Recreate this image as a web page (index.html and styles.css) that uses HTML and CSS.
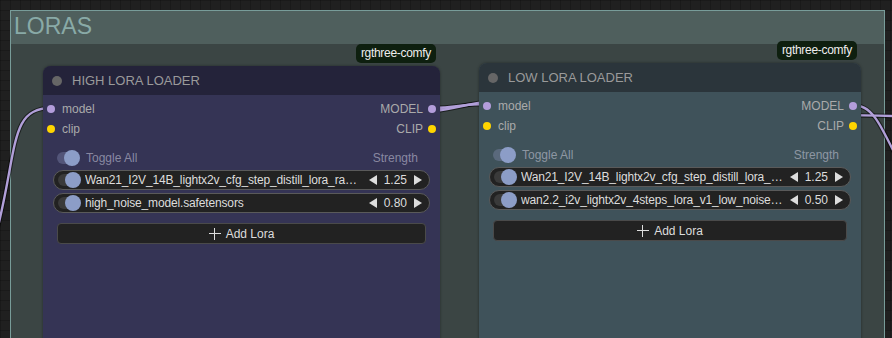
FILE: index.html
```html
<!DOCTYPE html>
<html lang="en">
<head>
    <meta charset="UTF-8">
    <title>LORAS</title>
    <link rel="stylesheet" href="styles.css">
</head>
<body>
    <div class="canvas">
        <div class="group">
            <div class="group-title">LORAS</div>
        </div>

        <!-- links are drawn under the nodes -->
        <svg class="links" width="892" height="338" viewBox="0 0 892 338">
            <g class="wire-shadow">
                <path d="M -40 338 C 30 180, -5 108, 51 108"/>
                <path d="M 430 108 C 462 108, 455 104, 487 104"/>
                <path d="M 400 113 C 458 113, 462 100, 520 100"/>
                <path d="M 840 115 C 860 115, 870 116, 900 116"/>
                <path d="M 851 105 C 872 105, 878 118, 905 175"/>
            </g>
            <g class="wire">
                <path d="M -40 338 C 30 180, -5 108, 51 108"/>
                <path d="M 430 108 C 462 108, 455 104, 487 104"/>
                <path d="M 400 113 C 458 113, 462 100, 520 100"/>
                <path d="M 840 115 C 860 115, 870 116, 900 116"/>
                <path d="M 851 105 C 872 105, 878 118, 905 175"/>
            </g>
        </svg>

        <div class="node node-high">
            <div class="badge">rgthree-comfy</div>
            <div class="node-title"><span class="title-dot"></span>HIGH LORA LOADER</div>
            <div class="node-body">
                <div class="slot">
                    <span class="slot-in"><i class="dot dot-model"></i>model</span>
                    <span class="slot-out">MODEL<i class="dot dot-model"></i></span>
                </div>
                <div class="slot">
                    <span class="slot-in"><i class="dot dot-clip"></i>clip</span>
                    <span class="slot-out">CLIP<i class="dot dot-clip"></i></span>
                </div>

                <div class="toggle-all">
                    <span class="switch"><i></i></span>
                    <span class="toggle-label">Toggle All</span>
                    <span class="strength-label">Strength</span>
                </div>

                <div class="lora">
                    <span class="switch"><i></i></span>
                    <span class="lora-name">Wan21_I2V_14B_lightx2v_cfg_step_distill_lora_rank64.safetensors</span>
                    <span class="arrow-left"></span>
                    <span class="lora-value">1.25</span>
                    <span class="arrow-right"></span>
                </div>
                <div class="lora">
                    <span class="switch"><i></i></span>
                    <span class="lora-name">high_noise_model.safetensors</span>
                    <span class="arrow-left"></span>
                    <span class="lora-value">0.80</span>
                    <span class="arrow-right"></span>
                </div>

                <button class="add-lora"><span class="plus"></span>Add Lora</button>
            </div>
        </div>

        <div class="node node-low">
            <div class="badge">rgthree-comfy</div>
            <div class="node-title"><span class="title-dot"></span>LOW LORA LOADER</div>
            <div class="node-body">
                <div class="slot">
                    <span class="slot-in"><i class="dot dot-model"></i>model</span>
                    <span class="slot-out">MODEL<i class="dot dot-model"></i></span>
                </div>
                <div class="slot">
                    <span class="slot-in"><i class="dot dot-clip"></i>clip</span>
                    <span class="slot-out">CLIP<i class="dot dot-clip"></i></span>
                </div>

                <div class="toggle-all">
                    <span class="switch"><i></i></span>
                    <span class="toggle-label">Toggle All</span>
                    <span class="strength-label">Strength</span>
                </div>

                <div class="lora">
                    <span class="switch"><i></i></span>
                    <span class="lora-name">Wan21_I2V_14B_lightx2v_cfg_step_distill_lora_rank64.safetensors</span>
                    <span class="arrow-left"></span>
                    <span class="lora-value">1.25</span>
                    <span class="arrow-right"></span>
                </div>
                <div class="lora">
                    <span class="switch"><i></i></span>
                    <span class="lora-name">wan2.2_i2v_lightx2v_4steps_lora_v1_low_noise.safetensors</span>
                    <span class="arrow-left"></span>
                    <span class="lora-value">0.50</span>
                    <span class="arrow-right"></span>
                </div>

                <button class="add-lora"><span class="plus"></span>Add Lora</button>
            </div>
        </div>
    </div>
</body>
</html>
```

FILE: styles.css
```css
body {
    margin: 0;
    padding: 0;
    background-color: #202020;
    font-family: 'Liberation Sans', Arial, sans-serif;
    overflow: hidden;
}
.canvas {
    position: relative;
    width: 892px;
    height: 338px;
    overflow: hidden;
    background-color: #202020;
    background-image:
        linear-gradient(rgba(0,0,0,0.18) 1px, transparent 1px),
        linear-gradient(90deg, rgba(0,0,0,0.18) 1px, transparent 1px);
    background-size: 10px 10px;
}

/* group box */
.group {
    position: absolute;
    left: 10px;
    top: 10px;
    width: 873px;
    height: 400px;
    border: 1px solid #789c99;
    background-color: #3b4544;
}
.group-title {
    height: 33px;
    background-color: #4f5f5d;
    color: #89aaa7;
    font-size: 23px;
    line-height: 30px;
    padding-left: 3px;
}

/* links */
.links {
    position: absolute;
    left: 0;
    top: 0;
}
.links path {
    fill: none;
}
.wire-shadow path {
    stroke: rgba(0,0,0,0.55);
    stroke-width: 4.5;
}
.wire path {
    stroke: #b19fd9;
    stroke-width: 2.4;
}

/* nodes */
.node {
    position: absolute;
    height: 320px;
    border-radius: 8px 8px 0 0;
    box-shadow: 0 0 3px rgba(0,0,0,0.4);
}
.node-high {
    left: 43px;
    top: 66px;
    width: 397px;
    background-color: #353455;
}
.node-high .node-title {
    background-color: #24233a;
}
.node-low {
    left: 479px;
    top: 63px;
    width: 382px;
    background-color: #3f525a;
}
.node-low .node-title {
    background-color: #2b353b;
}
.node-title {
    height: 29px;
    border-radius: 8px 8px 0 0;
    display: flex;
    align-items: center;
    color: #9a9a9a;
    font-size: 13px;
    padding-left: 9px;
}
.title-dot {
    width: 10px;
    height: 10px;
    border-radius: 50%;
    background-color: #666;
    margin-right: 10px;
}
.badge {
    position: absolute;
    right: 4px;
    top: -22px;
    height: 19px;
    padding: 0 5px;
    border-radius: 5px;
    background-color: #0e1f0f;
    color: #eee;
    font-size: 12px;
    line-height: 19px;
    letter-spacing: -0.3px;
}
.node-body {
    padding: 4px 10px 0 10px;
}

/* slots */
.slot {
    display: flex;
    justify-content: space-between;
    height: 20px;
    align-items: center;
    margin: 0 -6px 0 -6px;
    font-size: 12px;
    color: #aaa;
}
.slot-in, .slot-out {
    display: flex;
    align-items: center;
}
.dot {
    display: inline-block;
    width: 8px;
    height: 8px;
    border-radius: 50%;
}
.slot-in .dot {
    margin-right: 7px;
}
.slot-out .dot {
    margin-left: 5px;
}
.dot-model {
    background-color: #b39ddb;
}
.dot-clip {
    background-color: #ffd500;
}

/* toggle switch */
.switch {
    position: relative;
    flex: none;
    width: 22px;
    height: 12px;
    border-radius: 6px;
    background-color: #3a3a3a;
}
.switch i {
    position: absolute;
    right: -1px;
    top: -2px;
    width: 16px;
    height: 16px;
    border-radius: 50%;
    background-color: #8c9dc7;
}
.toggle-all {
    display: flex;
    align-items: center;
    height: 20px;
    margin-top: 9px;
    padding: 0 12px 0 4px;
    font-size: 12px;
    color: rgba(210,210,225,0.55);
}
.toggle-all .switch {
    background-color: rgba(140,150,190,0.35);
}
.toggle-label {
    margin-left: 7px;
    flex: 1;
}

/* lora rows */
.lora {
    display: flex;
    align-items: center;
    height: 18px;
    margin-top: 3px;
    padding: 0 7px 0 4px;
    border: 1px solid #5a5a5a;
    border-radius: 10px;
    background-color: #222;
    color: #ddd;
    font-size: 12px;
}
.toggle-all + .lora {
    margin-top: 2px;
}
.lora-name {
    flex: 1;
    min-width: 0;
    margin-left: 5px;
    margin-right: 6px;
    white-space: nowrap;
    overflow: hidden;
    text-overflow: ellipsis;
    letter-spacing: -0.15px;
}
.arrow-left, .arrow-right {
    flex: none;
    width: 0;
    height: 0;
    border-top: 5px solid transparent;
    border-bottom: 5px solid transparent;
}
.arrow-left {
    border-right: 8px solid #ddd;
}
.arrow-right {
    border-left: 8px solid #ddd;
}
.lora-value {
    margin: 0 7px;
}

/* add button */
.add-lora {
    display: flex;
    align-items: center;
    justify-content: center;
    width: calc(100% - 8px);
    height: 21px;
    margin: 10px 4px 0 4px;
    border: 1px solid #4a4a4a;
    border-radius: 4px;
    background-color: #222;
    color: #ddd;
    font-family: 'Liberation Sans', Arial, sans-serif;
    font-size: 12px;
    padding: 0;
}
.plus {
    position: relative;
    width: 12px;
    height: 12px;
    margin-right: 5px;
}
.plus::before, .plus::after {
    content: "";
    position: absolute;
    background-color: #ddd;
}
.plus::before {
    left: 0;
    top: 5px;
    width: 12px;
    height: 1px;
}
.plus::after {
    left: 5px;
    top: 0;
    width: 1px;
    height: 12px;
}
```
